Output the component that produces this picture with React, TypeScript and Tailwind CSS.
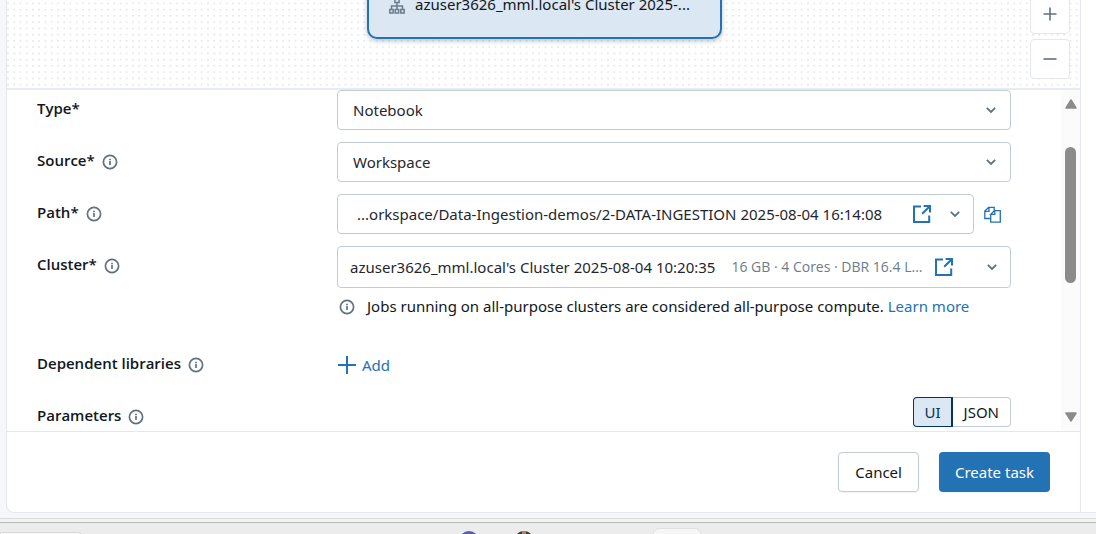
import { useState } from "react";
import type { ReactNode } from "react";

function InfoIcon() {
  return (
    <svg viewBox="0 0 16 16" className="size-4 shrink-0 text-[#5f7281]" fill="none" stroke="currentColor" aria-hidden="true">
      <circle cx="8" cy="8" r="6.6" strokeWidth="1.7" />
      <path d="M8 7.1V11M8 4.8v1.5" strokeWidth="1.7" />
    </svg>
  );
}

function ChevronIcon() {
  return (
    <svg viewBox="0 0 16 16" className="size-4 shrink-0 text-[#5f7281]" fill="none" stroke="currentColor" strokeWidth="1.8" aria-hidden="true">
      <path d="M3.8 5.9 8 10l4.2-4.1" />
    </svg>
  );
}

function OpenIcon() {
  return (
    <svg viewBox="0 0 18 18" className="size-[18px] shrink-0" fill="none" stroke="currentColor" strokeWidth="2" aria-hidden="true">
      <path d="M8 1.6H1V17h15.2v-6.4M10.6 1H17v6.4M16.8 1.2 9.2 8.8" />
    </svg>
  );
}

function CopyIcon() {
  return (
    <svg viewBox="0 0 17 17" className="size-[17px]" fill="none" stroke="currentColor" strokeWidth="1.3" aria-hidden="true">
      <path d="M6.6 12.5H.8V5L4.6 1.3h5.6v3.2M.8 5.4h4.2V1.3" />
      <path d="M6.7 8.4v7.8h9.6V4.7h-5.9L6.7 8.4h4.1V4.7" />
    </svg>
  );
}

function PlusIcon({ className }: { className: string }) {
  return (
    <svg viewBox="0 0 18 18" className={className} fill="none" stroke="currentColor" strokeWidth="2" aria-hidden="true">
      <path d="M9 0v18M0 9h18" />
    </svg>
  );
}

function ClusterIcon() {
  return (
    <svg viewBox="0 0 16 16" className="size-4 shrink-0 text-[#6b7c8a]" fill="none" stroke="currentColor" strokeWidth="1.5" aria-hidden="true">
      <path d="M5.9 1.2h4.2v3.4H5.9zM8 4.6v6.6M2.5 11.2V8h11v3.2M.8 11.5h3.4v3.4H.8zM6.3 11.5h3.4v3.4H6.3zM11.8 11.5h3.4v3.4h-3.4z" />
    </svg>
  );
}

function Row({ label, htmlFor, info = true, children }: { label: string; htmlFor: string; info?: boolean; children: ReactNode }) {
  return (
    <div className="flex items-start">
      <div className="flex w-[300px] shrink-0 items-end gap-[7px] pt-2">
        <label htmlFor={htmlFor} className="font-['Open_Sans',sans-serif] font-semibold leading-5">
          {label}
        </label>
        {info && <InfoIcon />}
      </div>
      <div className="min-w-0 flex-1">{children}</div>
    </div>
  );
}

function SelectField({ id, options }: { id: string; options: string[] }) {
  return (
    <div className="grid items-center">
      <select
        id={id}
        className="col-start-1 row-start-1 h-10 w-full appearance-none rounded border border-[#c0cdd8] bg-white px-[15px] text-[#1f272d]"
      >
        {options.map((o) => (
          <option key={o}>{o}</option>
        ))}
      </select>
      <span className="pointer-events-none col-start-1 row-start-1 mr-3 justify-self-end">
        <ChevronIcon />
      </span>
    </div>
  );
}

export default function App() {
  const [mode, setMode] = useState<"UI" | "JSON">("UI");

  return (
    <div className="flex h-screen min-h-[534px] flex-col bg-[#f5f7fa] font-['Noto_Sans','Open_Sans',sans-serif] text-[15px] text-[#11171c]">
      <main className="flex min-h-0 flex-1">
        <div className="w-[6px] shrink-0" />
        <section className="flex min-w-0 flex-1 flex-col overflow-hidden rounded-bl-lg border-x border-b border-[#e4e8ed] bg-white">
          <div className="relative h-[90px] shrink-0 overflow-hidden border-b-2 border-[#e8ecf0]">
            <svg className="absolute inset-0 size-full" aria-hidden="true">
              <defs>
                <pattern id="dots" width="6.25" height="6.25" patternUnits="userSpaceOnUse">
                  <circle cx="1" cy="3.4" r="0.95" fill="#e0e3e6" />
                </pattern>
              </defs>
              <rect width="100%" height="100%" fill="url(#dots)" />
            </svg>
            <div className="absolute bottom-[49px] left-[360px] flex h-[80px] w-[355px] items-end gap-[10px] rounded-[10px] border-2 border-[#2272b4] bg-[#dbe7f3] px-5 pb-[23px] shadow-[0_2px_5px_rgba(30,60,90,0.3)]">
              <ClusterIcon />
              <span className="whitespace-nowrap leading-5">azuser3626_mml.local's Cluster 2025-...</span>
            </div>
            <div className="absolute right-[10px] bottom-[9px] flex flex-col gap-[5px] text-[#5f7281]">
              <button type="button" aria-label="Zoom in" className="flex size-10 items-center justify-center rounded border border-[#e4e8ed] bg-white">
                <svg viewBox="0 0 14 14" className="size-[14px]" stroke="currentColor" strokeWidth="1.6" aria-hidden="true">
                  <path d="M7 .5v13M.5 7h13" />
                </svg>
              </button>
              <button type="button" aria-label="Zoom out" className="flex size-10 items-center justify-center rounded border border-[#e4e8ed] bg-white">
                <svg viewBox="0 0 14 14" className="size-[14px]" stroke="currentColor" strokeWidth="1.6" aria-hidden="true">
                  <path d="M.5 7h13" />
                </svg>
              </button>
            </div>
          </div>

          <div className="flex min-h-0 flex-1">
            <form className="flex min-w-0 flex-1 flex-col gap-3 overflow-hidden pr-[50px] pl-[30px]">
              <Row label="Type*" htmlFor="type" info={false}>
                <SelectField id="type" options={["Notebook", "Python script", "SQL"]} />
              </Row>
              <Row label="Source*" htmlFor="source">
                <SelectField id="source" options={["Workspace", "Git provider"]} />
              </Row>
              <Row label="Path*" htmlFor="path">
                <div className="flex items-center">
                  <div className="flex h-10 min-w-0 flex-1 items-center rounded border border-[#c0cdd8] pr-[10px] pl-[19px]">
                    <button type="button" id="path" className="min-w-0 flex-1 text-left whitespace-nowrap text-[#1f272d]">
                      ...orkspace/Data-Ingestion-demos/2-DATA-INGESTION 2025-08-04 16:14:08
                    </button>
                    <a href="#notebook" aria-label="Open notebook" className="mr-4 ml-[10px] text-[#2272b4]">
                      <OpenIcon />
                    </a>
                    <ChevronIcon />
                  </div>
                  <button type="button" aria-label="Copy path" className="mr-[10px] ml-[10px] text-[#2272b4]">
                    <CopyIcon />
                  </button>
                </div>
              </Row>
              <Row label="Cluster*" htmlFor="cluster">
                <div className="flex h-[42px] items-center rounded border border-[#c0cdd8] pr-[10px] pl-3">
                  <button type="button" id="cluster" className="flex min-w-0 flex-1 items-center gap-4 text-left whitespace-nowrap">
                    <span className="text-[#1f272d]">azuser3626_mml.local's Cluster 2025-08-04 10:20:35</span>
                    <span className="font-['Open_Sans',sans-serif] text-sm text-[#6b7c8a]">16 GB · 4 Cores · DBR 16.4 L...</span>
                  </button>
                  <a href="#cluster-details" aria-label="Open cluster" className="mr-[31px] ml-[10px] text-[#2272b4]">
                    <OpenIcon />
                  </a>
                  <ChevronIcon />
                </div>
                <p className="mt-2 mb-4 flex items-center gap-3 pl-[2px] leading-[21px]">
                  <InfoIcon />
                  <span className="whitespace-nowrap">
                    Jobs running on all-purpose clusters are considered all-purpose compute.{" "}
                    <a href="#learn-more" className="text-[#2272b4]">
                      Learn more
                    </a>
                  </span>
                </p>
              </Row>
              <Row label="Dependent libraries" htmlFor="add-library">
                <button type="button" id="add-library" className="flex h-10 items-center gap-[6px] pl-px text-[#2272b4]">
                  <PlusIcon className="size-[18px]" />
                  Add
                </button>
              </Row>
              <Row label="Parameters" htmlFor="mode-ui">
                <div className="flex justify-end">
                  {(["UI", "JSON"] as const).map((m) => (
                    <button
                      key={m}
                      type="button"
                      id={m === "UI" ? "mode-ui" : "mode-json"}
                      aria-pressed={mode === m}
                      onClick={() => setMode(m)}
                      className={
                        "h-[30px] border px-[10px] first:rounded-l last:rounded-r last:px-[11px] " +
                        (mode === m
                          ? "border-[#04355d] bg-[#dbe7f3] text-[#04355d] first:border-r-2"
                          : "border-[#c0cdd8] bg-white last:border-l-0")
                      }
                    >
                      {m}
                    </button>
                  ))}
                </div>
              </Row>
            </form>
            <div className="flex w-[19px] shrink-0 flex-col items-center bg-[#fbfbfb] py-[9px] text-[#8b8b8b]" aria-hidden="true">
              <svg viewBox="0 0 12 10" className="h-[10px] w-3" fill="currentColor" stroke="currentColor" strokeLinejoin="round" strokeWidth="1.5">
                <path d="M6 1 11 9H1z" />
              </svg>
              <div className="mt-[38px] h-[136px] w-[11px] rounded-full bg-[#8b8b8b]" />
              <svg viewBox="0 0 12 10" className="mt-auto h-[10px] w-3" fill="currentColor" stroke="currentColor" strokeLinejoin="round" strokeWidth="1.5">
                <path d="M6 9 1 1h10z" />
              </svg>
            </div>
          </div>

          <footer className="flex shrink-0 justify-end gap-5 border-t border-[#e4e8ed] pt-5 pr-[30px] pb-5">
            <button type="button" className="h-10 rounded border border-[#c0cdd8] bg-white px-4 shadow-xs">
              Cancel
            </button>
            <button type="button" className="h-10 rounded bg-[#2272b4] px-4 text-white shadow-xs">
              Create task
            </button>
          </footer>
        </section>
        <div className="w-[15px] shrink-0 border-b border-[#e4e8ed] bg-white" />
      </main>

      <div className="mt-[5px] h-[5px] shrink-0 border-y border-t-[#dcdcdc] border-b-[#b8b8b8] bg-[#f3f3f3]" />
      <div className="flex h-[11px] shrink-0 items-start overflow-hidden bg-[#ececec]" aria-hidden="true">
        <div className="mt-[9px] h-8 w-[85px] rounded-tr-lg border border-[#d8d8d8] bg-[#f8f8f8]" />
        <div className="mt-2 ml-[374px] size-5 shrink-0 rounded-full bg-[#5560ae]" />
        <div className="mt-2 ml-[35px] flex size-5 shrink-0 justify-center overflow-hidden rounded-full bg-[#3b3836]">
          <div className="h-5 w-1 bg-[#b58860]" />
        </div>
        <div className="mt-[5px] ml-[119px] h-8 w-[48px] shrink-0 rounded-md border border-[#e0e0e0] bg-[#f6f6f6]" />
      </div>
    </div>
  );
}
